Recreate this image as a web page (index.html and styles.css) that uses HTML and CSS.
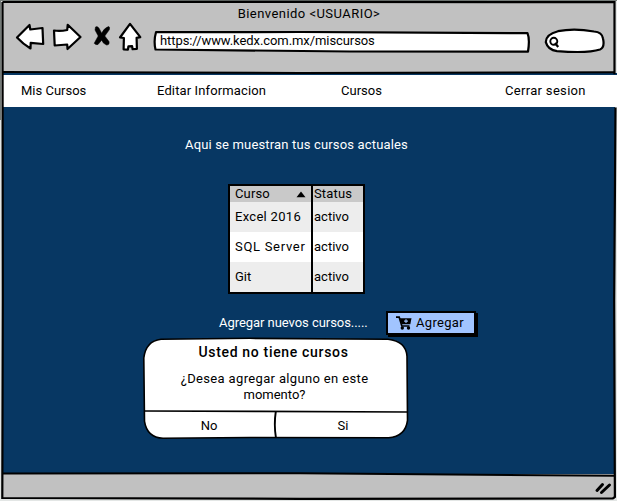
FILE: index.html
```html
<!DOCTYPE html>
<html lang="es">
<head>
<meta charset="utf-8">
<title>Mis Cursos</title>
<link rel="stylesheet" href="styles.css">
</head>
<body>
<div class="window">
  <header class="browser-bar">
    <div class="window-title"><span class="t-title">Bienvenido &lt;USUARIO&gt;</span></div>
    <div class="toolbar">
      <svg class="nav-icons" width="128" height="32" viewBox="15 22 128 32">
        <g fill="#fff" stroke="#000" stroke-width="2.2" stroke-linejoin="round">
          <path d="M17 37.500 29.500 25l.8 4.500L42.500 28l.7 16-12.500-1.200-.2 5.700Q23 44 17 37.500Z"/>
          <path d="M54 30.500Q60 31.500 67.200 30l.5-5.200L80.500 37 67.500 49l-.3-4.500-12.500 1Z"/>
          <path d="M130 23.800 140.300 37.200l-3.700.6.3 11.100-4.300.3-.5-3-3.700.1-.5 3.300-4.300-.2.300-11.400-3.900-.5Z"/>
        </g>
        <path d="M95.500 27q2-1.300 3.700 1.500l2.500 4.700Q104 28 108.500 26.500q1.700.2.800 3.300L104.800 36l4.200 5.500q.8 3.500-2.500 3.500-3.500-1.200-4.800-4.800L98 44.500q-2.500.7-3.800-1.200L98.200 36 95 30Z" stroke="#000" stroke-width=".5"/>
      </svg>
      <div class="address">
        <svg class="shape" width="377" height="22" viewBox="153 31 377 22"><path d="M156 32.200 300 32l227.500 1.200q2.500 6 .5 18.500L350 51.500 155.500 49.500q-2-9 .5-17.300Z" fill="#fff" stroke="#000" stroke-width="2.200" stroke-linejoin="round"/></svg>
        <span class="t-url">https://www.kedx.com.mx/miscursos</span>
      </div>
      <svg class="search" width="62" height="26" viewBox="544 28 62 26">
        <path d="M558 31.200Q574 28 594 31.500q8 .6 9 7 2 9-3 11-12 4-43 1.600-9-1-11.200-9 .2-8 12.200-10.900Z" fill="#fff" stroke="#000" stroke-width="2.200"/>
        <circle cx="553.800" cy="41.300" r="3.500" fill="none" stroke="#000" stroke-width="1.900"/>
        <path d="m555 43 3.200 4" stroke="#000" stroke-width="2.200"/>
      </svg>
    </div>
  </header>
  <nav class="menu">
    <a>Mis Cursos</a><a class="t-edit">Editar Informacion</a><a>Cursos</a><a class="t-exit">Cerrar sesion</a>
  </nav>
  <main class="content">
    <p class="intro">Aqui se muestran tus cursos actuales</p>
    <table class="courses">
      <thead><tr><th><div class="sortable"><span class="t-curso">Curso</span><svg width="10" height="7" viewBox="0 0 10 7"><path d="M.5 6.300 5 .5l4.500 5.800Z"/></svg></div></th><th><span class="t-status">Status</span></th></tr></thead>
      <tbody>
        <tr><td><span class="t-excel">Excel 2016</span></td><td>activo</td></tr>
        <tr><td><span class="t-sql">SQL Server</span></td><td>activo</td></tr>
        <tr><td>Git</td><td>activo</td></tr>
      </tbody>
    </table>
    <div class="add-row">
      <span class="t-add">Agregar nuevos cursos.....</span>
      <button class="add-button">
        <svg width="16" height="14" viewBox="0 0 16 14"><path d="M0 1.200h3.200L5.800 10H13.500" fill="none" stroke="#000" stroke-width="1.700"/><path d="M3.800 2.300H15.500L14.300 8.300H5.600Z"/><circle cx="6.300" cy="12" r="1.700"/><circle cx="12.500" cy="12" r="1.700"/><path d="M10 3.200v3.800M8.100 5.100h3.800" stroke="#a1c4ff" stroke-width="1.100"/></svg>
        <span>Agregar</span>
      </button>
    </div>
    <section class="dialog">
      <svg class="shape" width="268" height="104" viewBox="142 336 268 104">
        <path d="M161 339.200 250 338.300l138 1q18 2 19 17l.5 64q-2 16-19 17.500L250 437.500l-87 .8q-16-1-18.500-17L143.800 358q2-17 17.200-18.800Z" fill="#fff" stroke="#000" stroke-width="1.600"/>
        <path d="M144.500 411 260 411.300l147 .7" fill="none" stroke="#000" stroke-width="1.700"/>
        <path d="M275.800 411.500q-2 13 .1 26" fill="none" stroke="#000" stroke-width="1.900"/>
      </svg>
      <h2>Usted no tiene cursos</h2>
      <p><span class="t-question">¿Desea agregar alguno en este</span><br>momento?</p>
      <div class="choices"><span>No</span><span>Si</span></div>
    </section>
  </main>
  <footer class="status-bar">
    <svg width="18" height="14" viewBox="594 481 18 14"><path d="m597 490.500 5.500-6M601.500 492.500l8-7.500" fill="none" stroke="#000" stroke-width="3" stroke-linecap="round"/></svg>
  </footer>
  <svg class="outline" width="617" height="501" viewBox="0 0 617 501">
    <path d="M0 .5H617M.5 0V120" fill="none" stroke="#747b78"/>
    <path d="M2.500 2 300 1.800l314.500.4v72M615.500 107.500 614.200 300l.7 197-2 1.500L300 498.800 2.300 498l.5-200L2.500 2" fill="none" stroke="#000" stroke-width="2.200"/>
    <path d="M2 72 300 73l315-.8M2 473.500 300 473.300l315 2.500" fill="none" stroke="#000" stroke-width="2"/>
  </svg>
</div>
</body>
</html>
```
FILE: styles.css
```css
* { box-sizing: border-box; }
body { margin: 0; background: #e9ebea; font: 13px/16px Roboto, "Liberation Sans", sans-serif; color: #000; overflow: hidden; }
p, h2 { margin: 0; }
.window { position: relative; width: 617px; height: 501px; display: flex; flex-direction: column; padding: 2px 2px 2px 3px; background: #e3e6e5; }
.browser-bar { height: 71px; background: #c1c1c1; }
.window-title { height: 20px; padding-top: 4px; text-align: center; }
.t-title { letter-spacing: .45px; }
.toolbar { display: flex; align-items: flex-start; padding-left: 12px; }
.nav-icons { flex: none; }
.address { position: relative; width: 377px; height: 22px; margin: 9px 14px 0 10px; padding: 2px 0 0 7px; }
.t-url { letter-spacing: -.08px; }
.shape { position: absolute; inset: 0; }
.shape ~ * { position: relative; }
.search { flex: none; margin-top: 6px; }
.menu { display: grid; grid-template-columns: 136px 184px 164px 1fr; width: 614px; height: 34px; padding: 8px 0 0 18px; background: #fff; border-top: 2px solid #073763; }
.t-edit { letter-spacing: .13px; }
.t-exit { letter-spacing: .32px; }
.content { flex: 1; display: flex; flex-direction: column; background: #073763; }
.intro { height: 77px; padding: 30px 0 0 182px; color: #fff; letter-spacing: .16px; }
.courses { width: 137px; margin-left: 225px; border-collapse: collapse; border: 2px solid #000; background: #fff; }
.courses tr { height: 30px; }
.courses thead tr { height: 17px; background: #c9c9c9; }
.courses tbody tr:nth-child(odd) { background: #ededed; }
.courses tbody tr:last-child { height: 31px; }
.courses th, .courses td { padding: 0 0 0 1px; text-align: left; font-weight: 400; border-right: 2px solid #000; white-space: nowrap; }
.courses th:first-child, .courses td:first-child { width: 83px; padding-left: 5px; }
.sortable { display: flex; align-items: center; justify-content: space-between; padding-right: 5px; }
.t-curso, .t-status { letter-spacing: .15px; }
.t-excel { letter-spacing: .3px; }
.t-sql { letter-spacing: .7px; }
.add-row { display: flex; align-items: flex-start; justify-content: space-between; width: 473px; padding: 16px 0 0 216px; color: #fff; }
.t-add { margin-top: 5px; letter-spacing: -.05px; }
.add-button { display: flex; align-items: center; gap: 4px; width: 90px; height: 24px; margin-top: 1px; padding: 0 0 0 8px; border: 2px solid #000; box-shadow: 2px 2px 0 #000; background: #a1c4ff; color: #000; font: inherit; letter-spacing: .3px; }
.dialog { position: relative; width: 268px; height: 104px; margin: 1px 0 0 139px; padding-top: 8px; text-align: center; }
.dialog h2 { padding-right: 5px; font-size: 14px; line-height: 16px; font-weight: 500; letter-spacing: .67px; }
.dialog p { margin-top: 11px; padding-right: 3px; }
.t-question { letter-spacing: .35px; }
.choices { display: grid; grid-template-columns: 1fr 1fr; margin-top: 15px; }
.status-bar { height: 25px; display: flex; justify-content: flex-end; padding: 7px 3px 0 0; background: #c1c1c1; }
.outline { position: absolute; inset: 0; pointer-events: none; }
```
